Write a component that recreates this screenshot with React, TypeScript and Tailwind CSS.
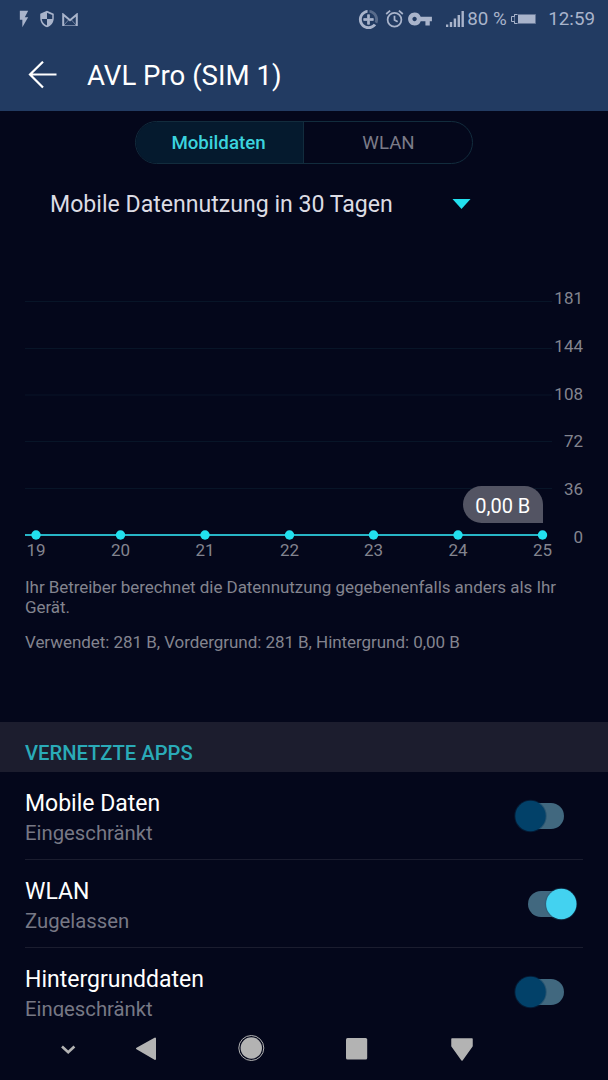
import { MdFlashOn, MdVpnKey } from 'react-icons/md'
import clsx from 'clsx'

const GRID = [301.5, 348.5, 395, 441.5, 488.5]

const Y_LABELS = [
  { text: '181', y: 304 },
  { text: '144', y: 351.5 },
  { text: '108', y: 399.5 },
  { text: '72', y: 447 },
  { text: '36', y: 495 },
  { text: '0', y: 543 },
]

const DAYS = [
  { label: '19', x: 36 },
  { label: '20', x: 120.5 },
  { label: '21', x: 205 },
  { label: '22', x: 289.5 },
  { label: '23', x: 373.5 },
  { label: '24', x: 458 },
  { label: '25', x: 542.5 },
]

const SETTINGS = [
  { title: 'Mobile Daten', status: 'Eingeschränkt', on: false },
  { title: 'WLAN', status: 'Zugelassen', on: true },
  { title: 'Hintergrunddaten', status: 'Eingeschränkt', on: false },
]

function StatusBar() {
  return (
    <div className="flex h-[38px] items-center pl-[14px] pr-[13px] text-[#a9b4cb]">
      <MdFlashOn className="h-[20px] w-[20px]" />
      <svg className="ml-[4px] h-[18px] w-[18px]" viewBox="0 0 24 24" fill="currentColor" fillRule="evenodd">
        <path d="M12 1l9 4v6c0 5.55-3.84 10.74-9 12-5.16-1.26-9-6.45-9-12V5zM12 3.7V12H5c.53 4.12 3.28 7.3 7 8.5V12h7V6.5z" />
      </svg>
      <svg className="ml-[6px] h-[13px] w-[16px]" viewBox="0 0 16 13" fill="none" stroke="currentColor">
        <path d="M1.2 13V1.5L8 7.2l6.8-5.7V13" strokeWidth="2" />
        <path d="M1 12.5h14M2 12l4.5-5M14 12 9.5 7" strokeWidth=".6" />
      </svg>

      <svg className="ml-auto h-[23px] w-[23px]" viewBox="0 0 24 24" fill="currentColor">
        <path d="M13 7h-2v4H7v2h4v4h2v-4h4v-2h-4z" stroke="currentColor" strokeWidth=".8" />
        <path d="M12 19c-3.87 0-7-3.13-7-7 0-3.53 2.61-6.43 6-6.92V2.05c-5.06.5-9 4.76-9 9.95 0 5.52 4.47 10 9.99 10 3.31 0 6.24-1.61 8.06-4.09l-2.6-1.53C16.17 17.98 14.21 19 12 19z" />
        <path d="M13 2.05v3.03c3.39.49 6 3.39 6 6.92 0 .9-.18 1.75-.48 2.54l2.6 1.53c.56-1.24.88-2.62.88-4.07 0-5.18-3.95-9.45-9-9.95z" opacity=".4" />
      </svg>
      <svg className="ml-[5px] h-[20px] w-[19px]" viewBox="0 0 24 24" fill="none" stroke="currentColor" strokeWidth="2.2">
        <circle cx="12" cy="13" r="8.7" />
        <path d="M12 8v5.2l4 2.3M1.5 5.7l5-4.2M22.5 5.7l-5-4.2" />
      </svg>
      <MdVpnKey className="ml-[3px] h-[26px] w-[26px]" />
      <svg className="ml-[13px] h-[18px] w-[18px]" viewBox="0 0 18 18" fill="currentColor">
        <path d="M0 14.5h2.3V17H0zM3.8 12h2.4v5H3.8zM7.7 8.5h2.4V17H7.7zM11.6 5H14v12h-2.4zM15.5 1h2.4v16h-2.4z" />
      </svg>
      <span className="ml-[3px] w-[40px] whitespace-nowrap text-[18.8px] leading-none">80 %</span>
      <svg className="ml-[4px] h-[10px] w-[25px]" viewBox="0 0 25 10">
        <path d="M6 .5H3.5v2h-3v5h3v2H6" fill="none" stroke="currentColor" />
        <path d="M3.5.5h21v9h-21z" fill="none" stroke="currentColor" strokeOpacity=".5" />
        <path d="M7 1h17v8H7z" fill="currentColor" />
      </svg>
      <span className="ml-[12px] text-[18.8px] leading-none">12:59</span>
    </div>
  )
}

function UsageChart() {
  return (
    <svg className="h-[336px] w-[608px] shrink-0" viewBox="0 229 608 336">
      {GRID.map(y => (
        <path key={y} d={`M25 ${y}H552`} stroke="#081528" />
      ))}
      {Y_LABELS.map(item => (
        <text key={item.text} x="583" y={item.y} textAnchor="end" fontSize="17" fill="#83848f">{item.text}</text>
      ))}
      <path d="M25 535H543" stroke="#27b4c6" strokeWidth="2" />
      {DAYS.map(day => (
        <g key={day.label}>
          <circle cx={day.x} cy="535" r="4.7" fill="#22e0ee" />
          <text x={day.x} y="556" textAnchor="middle" fontSize="17" fill="#83848f">{day.label}</text>
        </g>
      ))}
      <path d="M481.5 486H524.5A18.5 18.5 0 0 1 543 504.5V523H481.5A18.5 18.5 0 0 1 481.5 486Z" fill="#535463" />
      <text x="502.8" y="512.5" textAnchor="middle" fontSize="20" fill="#fff">0,00 B</text>
    </svg>
  )
}

function Toggle({ on }: { on: boolean }) {
  return (
    <svg className={clsx('h-[36px] w-[64px]', on ? 'mr-[4px]' : 'mr-[16px]')} viewBox="0 0 64 36">
      <rect x="13" y="5" width="48" height="26" rx="13" fill="#41687f" />
      <circle cx={on ? 46 : 27.5} cy="18" r="16.2" fill={on ? '#1f5a75' : '#073a5c'} opacity=".4" />
      <circle cx={on ? 46.3 : 27.5} cy="18" r="15.2" fill={on ? '#43d2f0' : '#024169'} />
    </svg>
  )
}

function NavBar() {
  return (
    <nav className="h-[63px] shrink-0">
      <svg className="h-[63px] w-[608px]" viewBox="0 1017 608 63" fill="#b3b3b3">
        <path d="m62 1046.5 6.2 5.7 6.2-5.7" fill="none" stroke="#b3b3b3" strokeWidth="2.6" />
        <path d="M137 1048.5 155 1038.5V1059Z" stroke="#b3b3b3" strokeWidth="2" strokeLinejoin="round" />
        <circle cx="251.3" cy="1048" r="10.7" />
        <circle cx="251.3" cy="1048" r="12.5" fill="none" stroke="#b3b3b3" />
        <rect x="346" y="1038" width="21.2" height="21.5" rx="1.5" />
        <path d="M452 1039h20v7l-10 14-10-14Z" stroke="#b3b3b3" strokeWidth="1.5" strokeLinejoin="round" />
      </svg>
    </nav>
  )
}

export default function App() {
  return (
    <div className="flex h-[1080px] w-[608px] flex-col overflow-hidden bg-[#04071b] font-['Roboto',sans-serif]">
      <header className="h-[111px] shrink-0 bg-[#223b62]">
        <StatusBar />
        <div className="flex h-[73px] items-center pl-[28px]">
          <svg className="h-[28px] w-[30px]" viewBox="0 0 30 28" fill="none" stroke="#fff" strokeWidth="2.2">
            <path d="M1.5 13.5h27M15 .7 2 13.5l13 13" />
          </svg>
          <h1 className="ml-[29px] pt-[2px] text-[27.6px] leading-none text-white">AVL Pro (SIM 1)</h1>
        </div>
      </header>

      {/* Network tabs */}
      <div className="mx-auto mt-[10px] flex h-[43px] w-[338px] shrink-0 overflow-hidden rounded-full border border-[#122c3d] text-[18.7px]">
        <button className="w-[168px] border-r border-[#122c3d] bg-[#051a2e] pr-[2px] pt-[2px] font-medium text-[#3bd3de]">Mobildaten</button>
        <button className="flex-1 pl-[1px] pt-[2px] text-[#7b7b88]">WLAN</button>
      </div>

      <div className="flex h-[65px] shrink-0 items-center pl-[50px] pt-[15px]">
        <span className="w-[402px] pt-[2px] text-[23.1px] leading-none text-[#dcdce4]">Mobile Datennutzung in 30 Tagen</span>
        <svg className="h-[10px] w-[19px]" viewBox="0 0 19 10" fill="#22e0ee">
          <path d="M.5 0h18l-9 10z" />
        </svg>
      </div>

      <UsageChart />

      <div className="flex h-[157px] shrink-0 flex-col gap-[15px] pl-[25px] pt-[12px] text-[17px] leading-[20px] tracking-[-0.052px] text-[#83848f]">
        <p>
          Ihr Betreiber berechnet die Datennutzung gegebenenfalls anders als Ihr
          <br />
          Gerät.
        </p>
        <p>Verwendet: 281 B, Vordergrund: 281 B, Hintergrund: 0,00 B</p>
      </div>

      <h2 className="flex h-[50px] shrink-0 items-center bg-[#1c1d2e] pl-[25px] pt-[12px] text-[20.2px] font-medium leading-none text-[#2aabb8]">
        VERNETZTE APPS
      </h2>

      {/* The last row scrolls under the navigation bar */}
      <div className="min-h-0 flex-1 overflow-hidden px-[25px]">
        {SETTINGS.map(item => (
          <div key={item.title} className="flex h-[88px] items-center border-b border-[#1b1d2f]">
            <div className="flex-1 pt-[5px]">
              <div className="text-[23px] leading-[30px] text-white">{item.title}</div>
              <div className="text-[20.3px] leading-[29px] text-[#777885]">{item.status}</div>
            </div>
            <Toggle on={item.on} />
          </div>
        ))}
      </div>

      <NavBar />
    </div>
  )
}
